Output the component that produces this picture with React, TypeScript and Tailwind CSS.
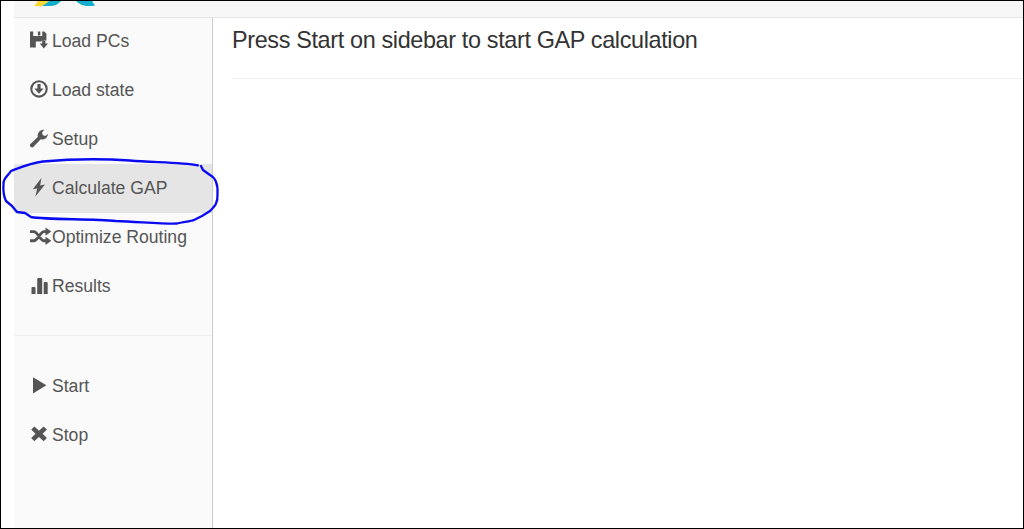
import type { ReactNode } from 'react';

const icons: Record<string, ReactNode> = {
  save: (
    <>
      <path d="M1 .4H4.2V6H13.2V.4H15.2L17.4 2.6V9.4H12.6V10.6H6.8V16.4H1Z" />
      <path d="M2.5 5H15V9.5H2.5Z M8.9 .4H11.3V4.4H8.9Z M13.2 9.8H16.4V12.6H19L14.8 17.4L10.8 12.6H13.2Z" />
    </>
  ),
  download: (
    <>
      <circle cx="10" cy="8.9" r="7.7" fill="none" stroke="currentColor" strokeWidth="2.1" />
      <path d="M8.4 4.1h3.2v4.4h3L10 13.7 5.4 8.5h3z" />
    </>
  ),
  wrench: (
    <path d="M1.2 15.2 8.8 8C8 4.3 10.7.7 15.2.8L12.9 3.7 14 6.3 16.3 6.9 18.9 5C18.6 8.9 15.3 11.2 11.7 10.3L4.3 18C2.7 19.3-.1 17 1.2 15.2Z" />
  ),
  bolt: <path d="M12.4 0 3.8 11.2 8.2 10.5 6.4 18.4 16 6.6 11.2 7.5Z" />,
  shuffle: (
    <>
      <path d="M1 4.6H4.8C8.5 4.6 11.5 13.8 15 13.8H17.5M1 13.8H4.8C8.5 13.8 11.5 4.6 15 4.6H17.5" fill="none" stroke="currentColor" strokeWidth="2.9" />
      <path d="M16.5.4 22.3 4.6 16.5 8.7ZM16.5 9.8 22.3 13.8 16.5 18Z" />
    </>
  ),
  chart: <path d="M2.5 12q0-1 1-1h2q1 0 1 1v6h-4ZM8.2 3q0-1 1-1h3q1 0 1 1v15H8.2ZM14.7 7q0-1 1-1h2q1 0 1 1v11h-4Z" />,
  play: <path d="M4 1.2 17.4 9.3 4 17.6Z" />,
  remove: <path d="M5.4 1.5 10 5.8 14.6 1.5 17.9 4.6 13.6 8.8 17.9 13 14.7 16.2 10 11.9 5.3 16.2 2.2 13 6.5 8.8 2.2 4.6Z" />,
};

function Item({ icon, label, active = false }: { icon: string; label: string; active?: boolean }) {
  return (
    <li className={`flex h-[49px] items-center pb-[2px] pl-[15px] text-[17.6px] leading-6 text-[#555] ${active ? 'bg-[#e5e5e5]' : ''}`}>
      <svg className="h-5 w-[23px] shrink-0" viewBox="0 0 23 20" fill="currentColor">
        {icons[icon]}
      </svg>
      <span className="whitespace-nowrap">{label}</span>
    </li>
  );
}

export default function App() {
  return (
    <div className="relative h-[529px] w-[1024px] overflow-hidden border border-black bg-white pl-[13px] font-['Liberation_Sans',Arial,sans-serif]">
      <header className="h-[17px] border-b border-[#e5e5e5] bg-[#f8f7f8]">
        <svg className="ml-[19px] block h-[7px] w-[64px]" viewBox="33 1 64 7">
          <path d="M38 1H49L44 6Q38 6.5 34 5.7Q36 4 38 1Z" fill="#fbd737" />
          <path d="M49 1H61Q57 6 50 6H42Q46 4 49 1Z" fill="#12aecb" />
          <path d="M76 1H92L95 5.5Q92 6.3 86 6Q80 5 76 1Z" fill="#12aecb" />
        </svg>
      </header>
      <div className="flex h-[510px]">
        <nav className="w-[199px] shrink-0 border-r border-[#ccc] bg-[#fafafa]">
          <ul className="-mt-px">
            <Item icon="save" label="Load PCs" />
            <Item icon="download" label="Load state" />
            <Item icon="wrench" label="Setup" />
            <Item icon="bolt" label="Calculate GAP" active />
            <Item icon="shuffle" label="Optimize Routing" />
            <Item icon="chart" label="Results" />
          </ul>
          <hr className="mt-6 mb-[26px] border-[#eee]" />
          <ul>
            <Item icon="play" label="Start" />
            <Item icon="remove" label="Stop" />
          </ul>
        </nav>
        <main className="grow pl-[19px]">
          <h1 className="h-[60px] pt-[7px] text-[23.4px] leading-[30px] tracking-[-0.35px] text-[#333]">Press Start on sidebar to start GAP calculation</h1>
          <hr className="border-[#eee]" />
        </main>
      </div>
      <svg className="pointer-events-none absolute -top-px -left-px h-[240px] w-[230px]" viewBox="0 0 230 240" fill="none" stroke="#0a0af0" strokeWidth="2.3" strokeLinecap="round" strokeLinejoin="round">
        <path d="M198 165.3C181 162 153 162.5 130 160.5C100 158.5 65 159.5 43 161.5C30 163 19 168 11 171C8 176 3 178 3.5 184C3 191 4 197 6 201L12 206L17 212L25 213L31 217C48 220 90 218.5 116 221C141 222 165 224 177 223.5C184 222 192 221 194 220L202 216L210 211C215 206 218 203 217.5 194C218 185 216 178 210 175L203 170L201 166" />
      </svg>
    </div>
  );
}
